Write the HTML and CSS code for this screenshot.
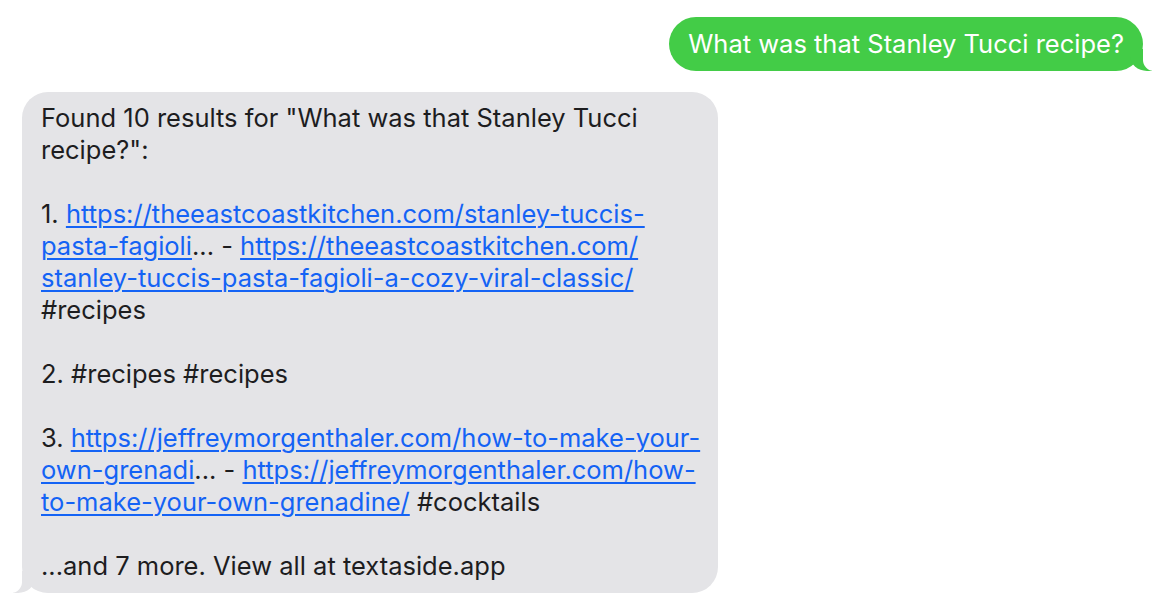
FILE: index.html
```html
<!DOCTYPE html>
<html lang="en">
<head>
<meta charset="utf-8">
<title>Messages</title>
<link rel="stylesheet" href="styles.css">
</head>
<body>
<main class="thread">
  <div class="row row-sent">
    <div class="bubble sent">What was that Stanley Tucci recipe?</div>
  </div>
  <div class="row row-received">
    <div class="bubble received">
      <p>Found 10 results for "What was that Stanley Tucci<br>recipe?":</p>
      <p>1. <a href="#">https://theeastcoastkitchen.com/stanley-tuccis-<br>pasta-fagioli</a>... - <a href="#">https://theeastcoastkitchen.com/<br>stanley-tuccis-pasta-fagioli-a-cozy-viral-classic/</a><br>#recipes</p>
      <p>2. #recipes #recipes</p>
      <p>3. <a href="#">https://jeffreymorgenthaler.com/how-to-make-your-<br>own-grenadi</a>... - <a href="#">https://jeffreymorgenthaler.com/how-<br>to-make-your-own-grenadine/</a> #cocktails</p>
      <p>...and 7 more. View all at textaside.app</p>
    </div>
  </div>
</main>
</body>
</html>
```
FILE: styles.css
```css
html, body {
  margin: 0;
  padding: 0;
  background: #ffffff;
}
body {
  font-family: Inter, "Noto Sans", "Liberation Sans", sans-serif;
  font-size: 25.5px;
  line-height: 32px;
  color: #1d1d1f;
}
.thread {
  display: flex;
  flex-direction: column;
  gap: 21px;
  padding: 17px 21px 0 22px;
}
.row {
  display: flex;
}
.row-sent {
  justify-content: flex-end;
}
.row-received {
  justify-content: flex-start;
}
.bubble {
  position: relative;
  border-radius: 27px;
  padding: 11px 19px;
  white-space: nowrap;
}
.sent {
  background: #43cc47;
  color: #ffffff;
}
.received {
  background: #e4e4e7;
  padding: 10px 19px 11px;
  width: 658px;
  border-radius: 26px;
}
.received p {
  margin: 0 0 32px;
}
.received p:last-child {
  margin-bottom: 0;
}
.received a {
  color: #1463f5;
  text-decoration: underline;
  text-underline-offset: 3px;
  text-decoration-thickness: 1.5px;
}
.sent::before,
.sent::after,
.received::before,
.received::after {
  content: "";
  position: absolute;
  bottom: 0;
  height: 22px;
}
.sent::before {
  right: -9px;
  width: 22px;
  background: #43cc47;
  border-bottom-left-radius: 17px 15px;
}
.sent::after {
  right: -22px;
  width: 22px;
  background: #ffffff;
  border-bottom-left-radius: 11px;
}
.received::before {
  left: -9px;
  width: 22px;
  background: #e4e4e7;
  border-bottom-right-radius: 17px 15px;
}
.received::after {
  left: -22px;
  width: 22px;
  background: #ffffff;
  border-bottom-right-radius: 11px;
}
```
